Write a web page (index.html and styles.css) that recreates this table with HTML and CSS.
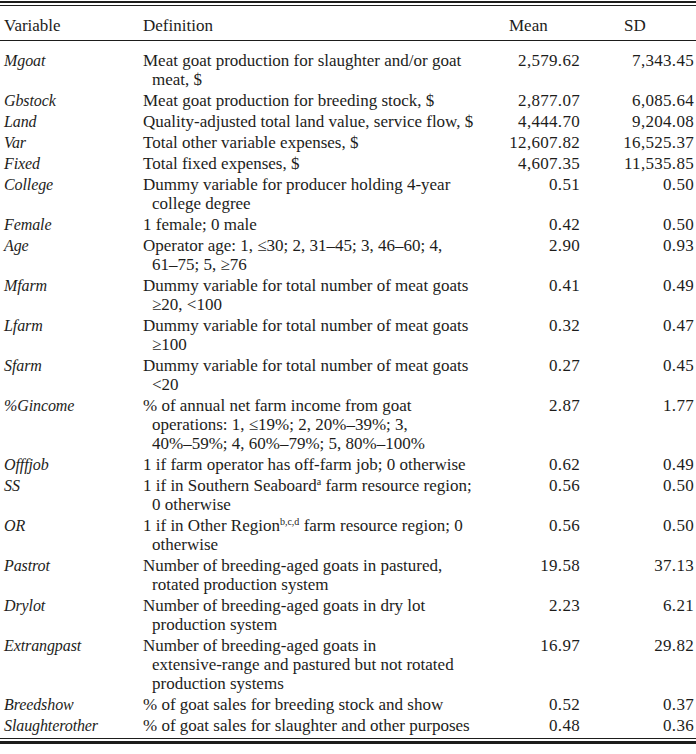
FILE: index.html
```html
<!DOCTYPE html>
<html lang="en">
<head>
<meta charset="utf-8">
<title>Variable definitions</title>
<link rel="stylesheet" href="styles.css">
</head>
<body>
<div class="rule-top"></div>
<table class="vars">
  <colgroup>
    <col class="w-var">
    <col class="w-def">
    <col class="w-mean">
    <col class="w-sd">
  </colgroup>
  <thead>
    <tr>
      <th class="c-var">Variable</th>
      <th class="c-def">Definition</th>
      <th class="c-mean">Mean</th>
      <th class="c-sd">SD</th>
    </tr>
  </thead>
  <tbody>
    <tr class="first"><td class="c-var">Mgoat</td><td class="c-def">Meat goat production for slaughter and/or goat<br>meat, $</td><td class="c-mean">2,579.62</td><td class="c-sd">7,343.45</td></tr>
    <tr><td class="c-var">Gbstock</td><td class="c-def">Meat goat production for breeding stock, $</td><td class="c-mean">2,877.07</td><td class="c-sd">6,085.64</td></tr>
    <tr><td class="c-var">Land</td><td class="c-def">Quality-adjusted total land value, service flow, $</td><td class="c-mean">4,444.70</td><td class="c-sd">9,204.08</td></tr>
    <tr><td class="c-var">Var</td><td class="c-def">Total other variable expenses, $</td><td class="c-mean">12,607.82</td><td class="c-sd">16,525.37</td></tr>
    <tr><td class="c-var">Fixed</td><td class="c-def">Total fixed expenses, $</td><td class="c-mean">4,607.35</td><td class="c-sd">11,535.85</td></tr>
    <tr><td class="c-var">College</td><td class="c-def">Dummy variable for producer holding 4-year<br>college degree</td><td class="c-mean">0.51</td><td class="c-sd">0.50</td></tr>
    <tr><td class="c-var">Female</td><td class="c-def">1 female; 0 male</td><td class="c-mean">0.42</td><td class="c-sd">0.50</td></tr>
    <tr><td class="c-var">Age</td><td class="c-def">Operator age: 1, ≤30; 2, 31–45; 3, 46–60; 4,<br>61–75; 5, ≥76</td><td class="c-mean">2.90</td><td class="c-sd">0.93</td></tr>
    <tr><td class="c-var">Mfarm</td><td class="c-def">Dummy variable for total number of meat goats<br>≥20, &lt;100</td><td class="c-mean">0.41</td><td class="c-sd">0.49</td></tr>
    <tr><td class="c-var">Lfarm</td><td class="c-def">Dummy variable for total number of meat goats<br>≥100</td><td class="c-mean">0.32</td><td class="c-sd">0.47</td></tr>
    <tr><td class="c-var">Sfarm</td><td class="c-def">Dummy variable for total number of meat goats<br>&lt;20</td><td class="c-mean">0.27</td><td class="c-sd">0.45</td></tr>
    <tr><td class="c-var">%Gincome</td><td class="c-def">% of annual net farm income from goat<br>operations: 1, ≤19%; 2, 20%–39%; 3,<br>40%–59%; 4, 60%–79%; 5, 80%–100%</td><td class="c-mean">2.87</td><td class="c-sd">1.77</td></tr>
    <tr><td class="c-var">Offfjob</td><td class="c-def">1 if farm operator has off-farm job; 0 otherwise</td><td class="c-mean">0.62</td><td class="c-sd">0.49</td></tr>
    <tr><td class="c-var">SS</td><td class="c-def">1 if in Southern Seaboard<sup>a</sup> farm resource region;<br>0 otherwise</td><td class="c-mean">0.56</td><td class="c-sd">0.50</td></tr>
    <tr><td class="c-var">OR</td><td class="c-def">1 if in Other Region<sup>b,c,d</sup> farm resource region; 0<br>otherwise</td><td class="c-mean">0.56</td><td class="c-sd">0.50</td></tr>
    <tr><td class="c-var">Pastrot</td><td class="c-def">Number of breeding-aged goats in pastured,<br>rotated production system</td><td class="c-mean">19.58</td><td class="c-sd">37.13</td></tr>
    <tr><td class="c-var">Drylot</td><td class="c-def">Number of breeding-aged goats in dry lot<br>production system</td><td class="c-mean">2.23</td><td class="c-sd">6.21</td></tr>
    <tr><td class="c-var">Extrangpast</td><td class="c-def">Number of breeding-aged goats in<br>extensive-range and pastured but not rotated<br>production systems</td><td class="c-mean">16.97</td><td class="c-sd">29.82</td></tr>
    <tr><td class="c-var">Breedshow</td><td class="c-def">% of goat sales for breeding stock and show</td><td class="c-mean">0.52</td><td class="c-sd">0.37</td></tr>
    <tr class="last"><td class="c-var">Slaughterother</td><td class="c-def">% of goat sales for slaughter and other purposes</td><td class="c-mean">0.48</td><td class="c-sd">0.36</td></tr>
  </tbody>
</table>
<div class="rule-bottom"></div>
</body>
</html>
```
FILE: styles.css
```css
html, body {
  margin: 0;
  padding: 0;
  background: #ffffff;
}

body {
  font-family: "Liberation Serif", "Times New Roman", serif;
  font-size: 17px;
  color: #1d1d1b;
  width: 696px;
}

.rule-top {
  margin-top: 1px;
  height: 2px;
  border-top: 2px solid #1d1d1b;
  border-bottom: 1px solid #1d1d1b;
}

.rule-bottom {
  height: 2px;
  border-top: 1px solid #1d1d1b;
  border-bottom: 3px solid #1d1d1b;
}

.vars {
  width: 696px;
  table-layout: fixed;
  border-collapse: collapse;
  border-spacing: 0;
}

.w-var { width: 143px; }
.w-def { width: 337px; }
.w-mean { width: 103px; }
.w-sd { width: 113px; }

.vars th,
.vars td {
  padding: 0 0 2px 0;
  line-height: 19px;
  vertical-align: top;
  font-weight: normal;
  white-space: nowrap;
}

.vars thead th {
  padding-top: 10px;
  padding-bottom: 5px;
  border-bottom: 1px solid #1d1d1b;
  text-align: left;
}

.vars tbody tr.first td {
  padding-top: 10px;
}

.vars tbody tr.last td {
  padding-bottom: 3px;
}

.vars .c-var {
  padding-left: 4px;
}

.vars td.c-var {
  font-style: italic;
  font-size: 16px;
  letter-spacing: -0.1px;
}

.vars td.c-def {
  padding-left: 9px;
  text-indent: -9px;
}

.vars td.c-mean,
.vars td.c-sd {
  text-align: right;
  letter-spacing: 0.3px;
}

.vars td.c-mean {
  padding-right: 3px;
}

.vars td.c-sd {
  padding-right: 2px;
}

.vars th.c-mean {
  padding-left: 29px;
}

.vars th.c-sd {
  padding-left: 41px;
}

sup {
  font-size: 10px;
  line-height: 0;
  vertical-align: 6px;
}
```
